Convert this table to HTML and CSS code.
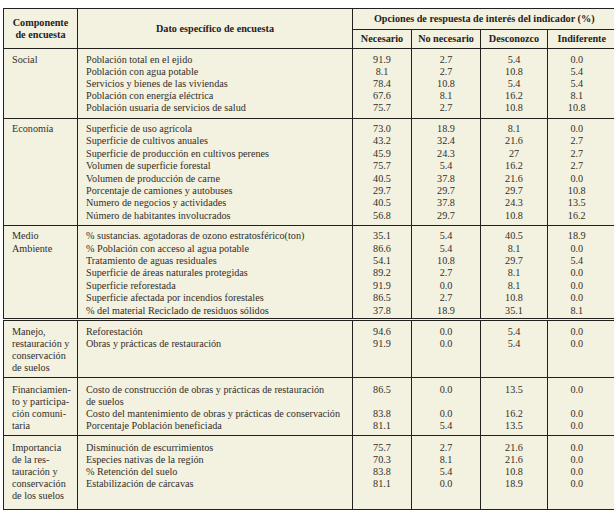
FILE: index.html
```html
<!DOCTYPE html>
<html lang="es">
<head>
<meta charset="utf-8">
<title>Opciones de respuesta de interés del indicador</title>
<link rel="stylesheet" href="styles.css">
</head>
<body>
<table class="t">
  <colgroup>
    <col class="c-comp"><col class="c-dato"><col class="c-n1"><col class="c-n2"><col class="c-n3"><col class="c-n4">
  </colgroup>
  <thead>
    <tr class="h1">
      <th rowspan="2" class="hc">Componente<br>de encuesta</th>
      <th rowspan="2" class="hd">Dato específico de encuesta</th>
      <th colspan="4" class="ho last">Opciones de respuesta de interés del indicador (%)</th>
    </tr>
    <tr class="h2">
      <th>Necesario</th><th>No necesario</th><th>Desconozco</th><th class="last">Indiferente</th>
    </tr>
  </thead>
  <tbody>
    <tr class="g g-soc">
      <td class="comp">Social</td>
      <td class="dato">Población total en el ejido<br>Población con agua potable<br>Servicios y bienes de las viviendas<br>Población con energía eléctrica<br>Población usuaria de servicios de salud</td>
      <td class="num">91.9<br>8.1<br>78.4<br>67.6<br>75.7</td>
      <td class="num">2.7<br>2.7<br>10.8<br>8.1<br>2.7</td>
      <td class="num">5.4<br>10.8<br>5.4<br>16.2<br>10.8</td>
      <td class="num last">0.0<br>5.4<br>5.4<br>8.1<br>10.8</td>
    </tr>
    <tr class="g g-eco">
      <td class="comp">Economía</td>
      <td class="dato">Superficie de uso agrícola<br>Superficie de cultivos anuales<br>Superficie de producción en cultivos perenes<br>Volumen de superficie forestal<br>Volumen de producción de carne<br>Porcentaje de camiones y autobuses<br>Numero de negocios y actividades<br>Número de habitantes involucrados</td>
      <td class="num">73.0<br>43.2<br>45.9<br>75.7<br>40.5<br>29.7<br>40.5<br>56.8</td>
      <td class="num">18.9<br>32.4<br>24.3<br>5.4<br>37.8<br>29.7<br>37.8<br>29.7</td>
      <td class="num">8.1<br>21.6<br>27<br>16.2<br>21.6<br>29.7<br>24.3<br>10.8</td>
      <td class="num last">0.0<br>2.7<br>2.7<br>2.7<br>0.0<br>10.8<br>13.5<br>16.2</td>
    </tr>
    <tr class="g g-med">
      <td class="comp">Medio<br>Ambiente</td>
      <td class="dato">% sustancias. agotadoras de ozono estratosférico(ton)<br>% Población con acceso al agua potable<br>Tratamiento de aguas residuales<br>Superficie de áreas naturales protegidas<br>Superficie reforestada<br>Superficie afectada por incendios forestales<br>% del material Reciclado de residuos sólidos</td>
      <td class="num">35.1<br>86.6<br>54.1<br>89.2<br>91.9<br>86.5<br>37.8</td>
      <td class="num">5.4<br>5.4<br>10.8<br>2.7<br>0.0<br>2.7<br>18.9</td>
      <td class="num">40.5<br>8.1<br>29.7<br>8.1<br>8.1<br>10.8<br>35.1</td>
      <td class="num last">18.9<br>0.0<br>5.4<br>0.0<br>0.0<br>0.0<br>8.1</td>
    </tr>
    <tr class="g g-man">
      <td class="comp">Manejo,<br>restauración y<br>conservación<br>de suelos</td>
      <td class="dato">Reforestación<br>Obras y prácticas de restauración</td>
      <td class="num">94.6<br>91.9</td>
      <td class="num">0.0<br>0.0</td>
      <td class="num">5.4<br>5.4</td>
      <td class="num last">0.0<br>0.0</td>
    </tr>
    <tr class="g g-fin">
      <td class="comp">Financiamien-<br>to y participa-<br>ción comuni-<br>taria</td>
      <td class="dato">Costo de construcción de obras y prácticas de restauración<br>de suelos<br>Costo del mantenimiento de obras y prácticas de conservación<br>Porcentaje Población beneficiada</td>
      <td class="num">86.5<br><br>83.8<br>81.1</td>
      <td class="num">0.0<br><br>0.0<br>5.4</td>
      <td class="num">13.5<br><br>16.2<br>13.5</td>
      <td class="num last">0.0<br><br>0.0<br>0.0</td>
    </tr>
    <tr class="g g-imp">
      <td class="comp">Importancia<br>de la res-<br>tauración y<br>conservación<br>de los suelos</td>
      <td class="dato">Disminución de escurrimientos<br>Especies nativas de la región<br>% Retención del suelo<br>Estabilización de cárcavas</td>
      <td class="num">75.7<br>70.3<br>83.8<br>81.1</td>
      <td class="num">2.7<br>8.1<br>5.4<br>0.0</td>
      <td class="num">21.6<br>21.6<br>10.8<br>18.9</td>
      <td class="num last">0.0<br>0.0<br>0.0<br>0.0</td>
    </tr>
  </tbody>
</table>
</body>
</html>
```
FILE: styles.css
```css
html, body {
  margin: 0;
  padding: 0;
  background: #ffffff;
}

.t {
  margin: 8px 0 0 3px;
  border-collapse: collapse;
  table-layout: fixed;
  width: 612px;
  background: #f3f1df;
  font-family: "Liberation Serif", "Times New Roman", serif;
  font-size: 10.2px;
  color: #322f2a;
}

.c-comp { width: 74px; }
.c-dato { width: 275px; }
.c-n1 { width: 59px; }
.c-n2 { width: 69px; }
.c-n3 { width: 67px; }
.c-n4 { width: 68px; }

.t th,
.t td {
  border: 1px solid #23211d;
}

.t .last {
  border-right: none;
}

.t th {
  font-weight: bold;
  color: #24221e;
  line-height: 12px;
  text-align: center;
  vertical-align: middle;
}

.h1 th {
  padding: 4px 4px;
}

.h2 th {
  padding: 3px 4px;
}

.t td {
  vertical-align: top;
  line-height: 12px;
  padding: 5px 8px 4px;
  white-space: nowrap;
}

.t td.num {
  text-align: center;
  padding-left: 4px;
  padding-right: 4px;
}

.t td.num.last {
  padding-right: 14px;
}

.g-eco td,
.g-med td {
  line-height: 12.4px;
}

.g-eco td {
  padding-top: 4px;
  padding-bottom: 3px;
}

.g-med td {
  padding-top: 4px;
  padding-bottom: 1px;
}

.g-man td {
  border-top: 3px double #23211d;
  padding-top: 5px;
  padding-bottom: 3px;
}

.g-fin td {
  padding-top: 6px;
  padding-bottom: 3px;
}

.g-imp td {
  padding-top: 6px;
  padding-bottom: 7px;
}
```
